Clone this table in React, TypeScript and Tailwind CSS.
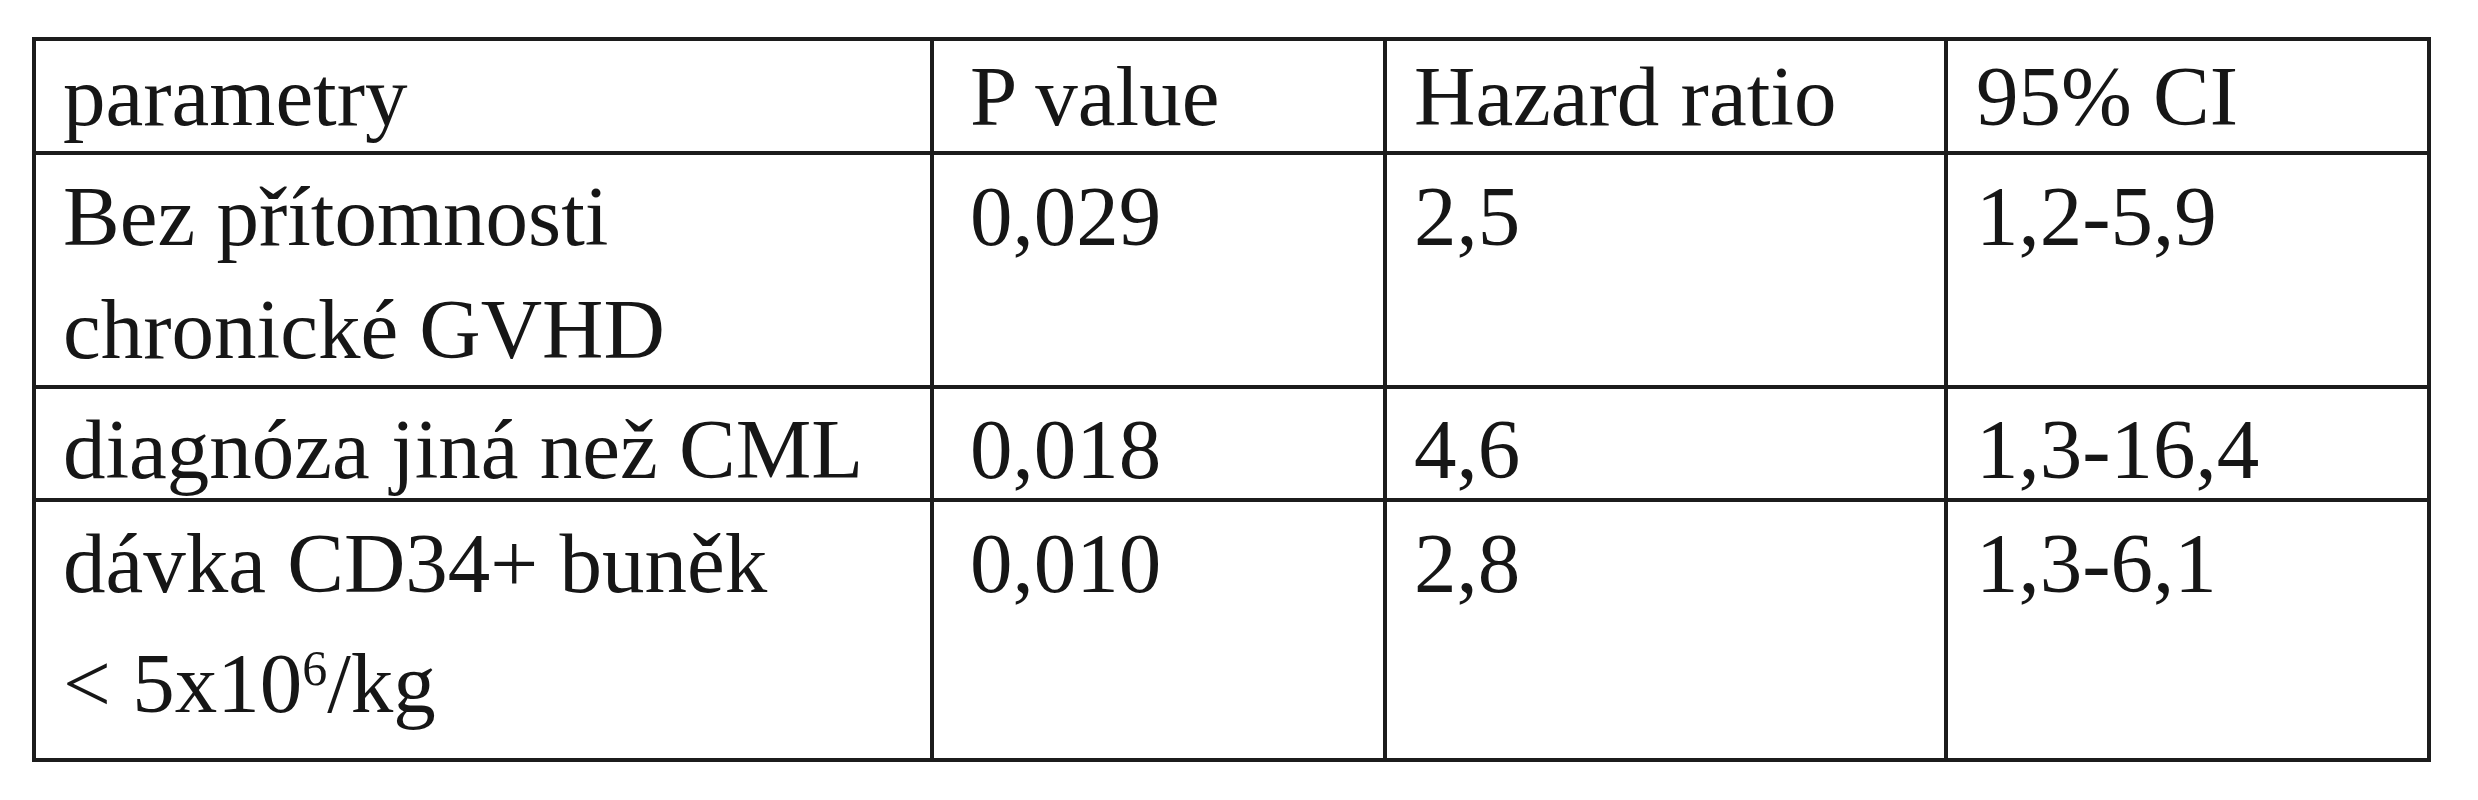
import React from "react";

const cell = "bg-white text-[#161616]";
const cols = ["pl-[27px]", "pl-[36px]", "pl-[27px]", "pl-[28px]"];

export default function App() {
  return (
    <div
      className="w-[2478px] h-[800px] bg-white pl-[32px] pt-[37px]"
      style={{ fontFamily: '"Liberation Serif", "Times New Roman", serif' }}
    >
      <div className="grid w-fit grid-cols-[894px_449px_557px_479px] grid-rows-[110px_230px_109px_256px] gap-[4px] bg-[#1c1c1c] p-[4px] text-[85px] leading-[113px]">
        {/* header */}
        <div className={`${cell} ${cols[0]} leading-[110px]`}>parametry</div>
        <div className={`${cell} ${cols[1]} leading-[110px]`}>P value</div>
        <div className={`${cell} ${cols[2]} leading-[110px]`}>Hazard ratio</div>
        <div className={`${cell} ${cols[3]} leading-[110px]`}>95% CI</div>

        {/* row 1 */}
        <div className={`${cell} ${cols[0]} pt-[5px]`}>
          Bez přítomnosti
          <br />
          chronické GVHD
        </div>
        <div className={`${cell} ${cols[1]} pt-[5px]`}>0,029</div>
        <div className={`${cell} ${cols[2]} pt-[5px]`}>2,5</div>
        <div className={`${cell} ${cols[3]} pt-[5px]`}>1,2-5,9</div>

        {/* row 2 */}
        <div className={`${cell} ${cols[0]} pt-[4px]`}>diagnóza jiná než CML</div>
        <div className={`${cell} ${cols[1]} pt-[4px]`}>0,018</div>
        <div className={`${cell} ${cols[2]} pt-[4px]`}>4,6</div>
        <div className={`${cell} ${cols[3]} pt-[4px]`}>1,3-16,4</div>

        {/* row 3 */}
        <div className={`${cell} ${cols[0]} pt-[5px]`}>
          <div>dávka CD34+ buněk</div>
          <div className="mt-[7px]">
            &lt; 5x10
            <span className="relative bottom-[27px] align-baseline text-[50px] leading-none">6</span>
            /kg
          </div>
        </div>
        <div className={`${cell} ${cols[1]} pt-[5px]`}>0,010</div>
        <div className={`${cell} ${cols[2]} pt-[5px]`}>2,8</div>
        <div className={`${cell} ${cols[3]} pt-[5px]`}>1,3-6,1</div>
      </div>
    </div>
  );
}
